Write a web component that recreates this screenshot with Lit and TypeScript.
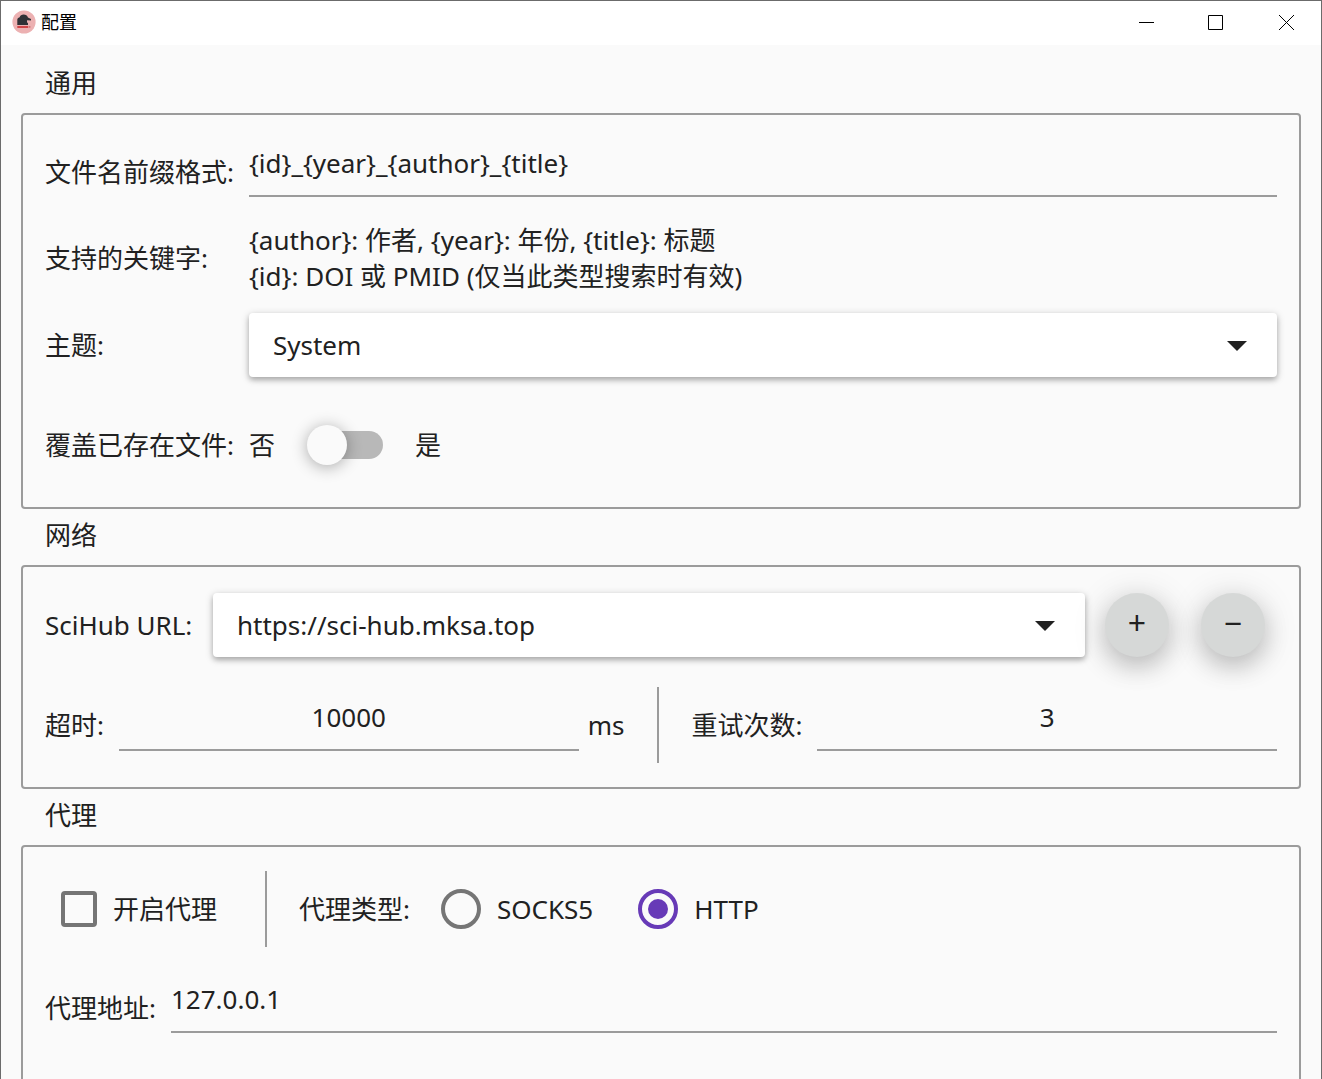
import { LitElement, html, css, svg } from "lit";
import { customElement, property, state } from "lit/decorators.js";

@customElement("title-bar")
class TitleBar extends LitElement {
  @property() heading = "";

  static styles = css`
    :host {
      display: flex;
      align-items: center;
      box-sizing: border-box;
      flex: none;
      height: 44px;
      padding-bottom: 2px;
      background: #fff;
      color: #000;
    }
    .logo {
      width: 24px;
      height: 24px;
      margin: 0 5px 0 11px;
    }
    .heading {
      flex: 1;
      margin: 0;
      font-size: 18px;
      font-weight: 400;
      line-height: 24px;
    }
    .control {
      display: grid;
      place-items: center;
      width: 70px;
      height: 42px;
      padding: 0;
      border: 0;
      background: none;
      color: #000;
    }
    .glyph {
      width: 16px;
      height: 16px;
      fill: none;
      stroke: currentColor;
    }
  `;

  render() {
    return html`
      <svg class="logo" viewBox="0 0 24 24" aria-hidden="true">
        <circle cx="12" cy="12" r="11.6" fill="#ecb1b2" />
        <path
          d="M5.3 15V9.8C5.3 8.4 6 7.6 7.6 7.2C8.2 5.4 9.6 4.4 11.6 4.4C13.8 4.4 15.4 5.6 16 7.4L19 9V10.4L15 10.2V12.2L16 13.2V15Z"
          fill="#2f3136"
        />
        <rect x="5.3" y="16" width="11" height="2" fill="#cf4548" />
        <rect x="17" y="16" width="1.4" height="1.8" fill="#cf7577" />
      </svg>
      <h1 class="heading">${this.heading}</h1>
      <button class="control" aria-label="最小化">
        <svg class="glyph" viewBox="0 0 16 16">${svg`<path d="M1 8.5H16" />`}</svg>
      </button>
      <button class="control" aria-label="最大化">
        <svg class="glyph" viewBox="0 0 16 16">${svg`<path d="M0.5 1.5H14.5V15.5H0.5Z" />`}</svg>
      </button>
      <button class="control" aria-label="关闭">
        <svg class="glyph" viewBox="0 0 16 16">${svg`<path d="M1 1L16 16M16 1L1 16" />`}</svg>
      </button>
    `;
  }
}

@customElement("settings-group")
class SettingsGroup extends LitElement {
  @property() heading = "";

  static styles = css`
    :host {
      display: block;
    }
    .heading {
      margin: 0;
      padding: 8px 24px 12px;
      font-size: 26px;
      font-weight: 400;
      line-height: 36px;
    }
    .frame {
      padding: 22px 22px 6px;
      border: 2px solid #9b9b9b;
      border-radius: 4px;
    }
  `;

  render() {
    return html`
      <section>
        <h2 class="heading">${this.heading}</h2>
        <div class="frame"><slot></slot></div>
      </section>
    `;
  }
}

@customElement("app-root")
class AppRoot extends LitElement {
  @state() theme = "System";
  @state() url = "https://sci-hub.mksa.top";

  static styles = css`
    :host {
      display: flex;
      flex-direction: column;
      box-sizing: border-box;
      height: 100vh;
      overflow: hidden;
      border: 1px solid #6b6b6b;
      border-bottom: 0;
      background: #fafafa;
      color: #212121;
      font-family: "Noto Sans", "Noto Sans CJK SC", sans-serif;
      font-size: 26px;
      line-height: 36px;
    }
    * {
      box-sizing: border-box;
    }
    .page {
      flex: 1;
      min-height: 0;
      overflow: hidden;
      padding: 12px 20px 0;
    }
    .general {
      display: grid;
      grid-template-columns: auto 1fr;
      grid-template-rows: 70px 86px 72px 112px;
      align-items: center;
      gap: 8px 15px;
    }
    .stack {
      display: flex;
      flex-direction: column;
      gap: 26px;
      padding-bottom: 18px;
    }
    .row {
      display: flex;
      align-items: center;
      gap: 15px;
    }
    .urls {
      min-height: 72px;
      padding-right: 12px;
    }
    .split {
      min-height: 76px;
    }
    .name {
      white-space: nowrap;
    }
    .urls .name {
      min-width: 153px;
    }
    .hint {
      margin: 0;
    }
    .field {
      flex: 1;
      width: 100%;
      min-width: 0;
      height: 60px;
      margin: 0 0 10px;
      padding: 0 0 6px;
      border: 0;
      border-bottom: 2px solid #9b9b9b;
      border-radius: 0;
      outline: 0;
      background: none;
      color: inherit;
      font: inherit;
    }
    .number {
      margin-bottom: 8px;
      text-align: center;
    }
    .unit {
      margin-left: -6px;
      margin-right: 18px;
    }
    .divider {
      width: 2px;
      height: 76px;
      flex: none;
      margin-right: 17px;
      background: #9b9b9b;
    }
    .picker {
      display: grid;
      flex: 1;
      align-items: center;
      min-width: 0;
    }
    .select {
      grid-area: 1 / 1;
      appearance: none;
      width: 100%;
      height: 64px;
      padding: 0 72px 0 24px;
      border: 0;
      border-radius: 4px;
      background: #fff;
      box-shadow: 0 2px 8px rgba(0, 0, 0, 0.2), 0 3px 5px rgba(0, 0, 0, 0.2);
      color: inherit;
      font: inherit;
    }
    .arrow {
      grid-area: 1 / 1;
      justify-self: end;
      width: 20px;
      height: 10px;
      margin-top: 2px;
      margin-right: 30px;
      fill: #212121;
      pointer-events: none;
    }
    .toggle {
      display: flex;
      align-items: center;
      gap: 32px;
    }
    .switch {
      appearance: none;
      display: grid;
      align-items: center;
      width: 76px;
      height: 40px;
      margin: 0;
    }
    .switch::before {
      content: "";
      grid-area: 1 / 1;
      justify-self: end;
      width: 72px;
      height: 28px;
      border-radius: 14px;
      background: #b8b8b8;
    }
    .switch::after {
      content: "";
      grid-area: 1 / 1;
      width: 40px;
      height: 40px;
      border-radius: 50%;
      background: #fafafa;
      box-shadow: 0 2px 16px rgba(0, 0, 0, 0.32);
    }
    .switch:checked::after {
      justify-self: end;
      background: #673ab7;
    }
    .actions {
      display: flex;
      gap: 32px;
      margin-left: 5px;
    }
    .round {
      width: 64px;
      height: 64px;
      padding: 0 0 4px;
      border: 0;
      border-radius: 50%;
      background: #d6d8d7;
      box-shadow: 0 4px 36px rgba(0, 0, 0, 0.14), 0 10px 24px rgba(0, 0, 0, 0.18);
      color: inherit;
      font: inherit;
      font-size: 32px;
    }
    .option {
      display: flex;
      align-items: center;
      gap: 16px;
      white-space: nowrap;
    }
    .enable {
      margin: 0 33px 0 16px;
    }
    .socks {
      margin: 0 30px 0 16px;
    }
    .check {
      appearance: none;
      width: 36px;
      height: 36px;
      margin: 0;
      border: 4px solid #757575;
      border-radius: 4px;
    }
    .check:checked {
      border-color: #673ab7;
      background: #673ab7;
    }
    .radio {
      appearance: none;
      display: grid;
      place-items: center;
      width: 40px;
      height: 40px;
      margin: 0;
      border: 4px solid #757575;
      border-radius: 50%;
    }
    .radio:checked {
      border-color: #673ab7;
    }
    .radio:checked::before {
      content: "";
      width: 20px;
      height: 20px;
      border-radius: 50%;
      background: #673ab7;
    }
    .proxy {
      padding: 2px 0 64px;
    }
  `;

  private picker(id: string, value: string) {
    return html`
      <div class="picker">
        <select class="select" id=${id}>
          <option selected>${value}</option>
        </select>
        <svg class="arrow" viewBox="0 0 20 10" aria-hidden="true"><path d="M0 0H20L10 10Z" /></svg>
      </div>
    `;
  }

  render() {
    return html`
      <title-bar heading="配置"></title-bar>
      <main class="page">
        <settings-group heading="通用">
          <div class="general">
            <label class="name" for="prefix">文件名前缀格式:</label>
            <input class="field" id="prefix" type="text" value="{id}_{year}_{author}_{title}" />
            <span class="name">支持的关键字:</span>
            <p class="hint">
              {author}: 作者, {year}: 年份, {title}: 标题<br />
              {id}: DOI 或 PMID (仅当此类型搜索时有效)
            </p>
            <label class="name" for="theme">主题:</label>
            ${this.picker("theme", this.theme)}
            <label class="name" for="overwrite">覆盖已存在文件:</label>
            <div class="toggle">
              <span>否</span>
              <input class="switch" id="overwrite" type="checkbox" role="switch" />
              <span>是</span>
            </div>
          </div>
        </settings-group>

        <settings-group heading="网络">
          <div class="stack">
            <div class="row urls">
              <label class="name" for="url">SciHub URL:</label>
              ${this.picker("url", this.url)}
              <div class="actions">
                <button class="round">+</button>
                <button class="round">−</button>
              </div>
            </div>
            <div class="row split">
              <label class="name" for="timeout">超时:</label>
              <input class="field number" id="timeout" type="text" inputmode="numeric" value="10000" />
              <span class="unit">ms</span>
              <span class="divider"></span>
              <label class="name" for="retries">重试次数:</label>
              <input class="field number" id="retries" type="text" inputmode="numeric" value="3" />
            </div>
          </div>
        </settings-group>

        <settings-group heading="代理">
          <div class="stack proxy">
            <div class="row split">
              <label class="option enable"><input class="check" type="checkbox" />开启代理</label>
              <span class="divider"></span>
              <span class="name">代理类型:</span>
              <label class="option socks"><input class="radio" type="radio" name="kind" />SOCKS5</label>
              <label class="option"><input class="radio" type="radio" name="kind" checked />HTTP</label>
            </div>
            <div class="row">
              <label class="name" for="host">代理地址:</label>
              <input class="field" id="host" type="text" value="127.0.0.1" />
            </div>
          </div>
        </settings-group>
      </main>
    `;
  }
}
